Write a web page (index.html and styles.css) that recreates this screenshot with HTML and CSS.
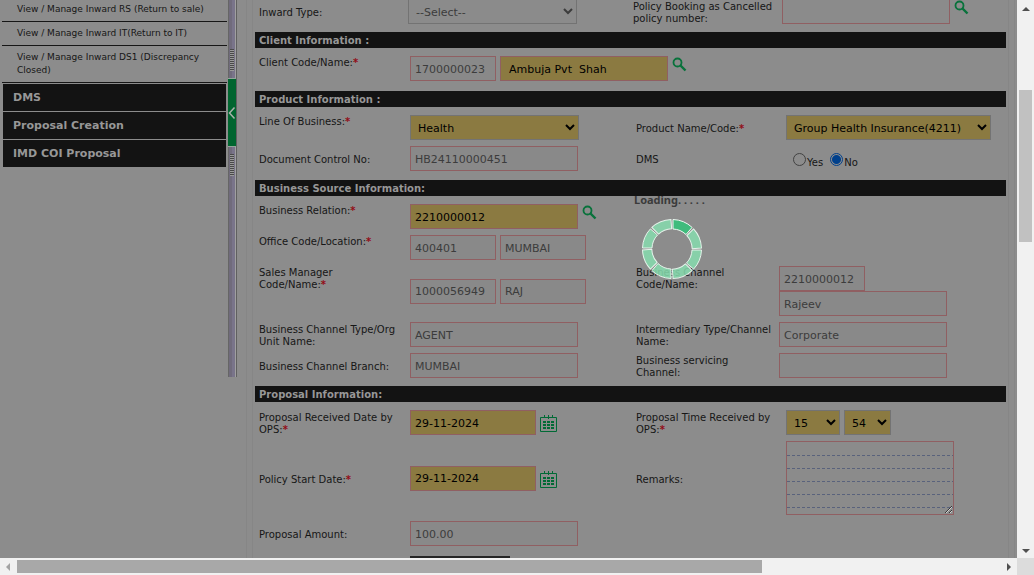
FILE: index.html
```html
<!DOCTYPE html>
<html lang="en">
<head>
<meta charset="utf-8">
<meta name="viewport" content="width=device-width, initial-scale=1">
<title>Proposal Creation</title>
<link rel="stylesheet" href="styles.css">
</head>
<body>
<svg class="sprite" aria-hidden="true">
  <symbol id="search" viewBox="0 0 15 15">
    <circle cx="5.5" cy="5.5" r="4" fill="none" stroke="#08723b" stroke-width="1.8"/>
    <path d="M8.5 8.5L13.5 13.5" stroke="#08723b" stroke-width="2.4"/>
  </symbol>
  <symbol id="calendar" viewBox="0 0 17 17">
    <path d="M.5 2.5H16.500V16.500H.5ZM4.500 0V3M8.500 0V4M12.500 0V3" fill="none" stroke="#006a35"/>
    <path d="M3 7h3M7 7h3M11 7h3M3 10h3M7 10h3M11 10h3M3 13h3M7 13h3M11 13h3" stroke="#006a35" stroke-width="2"/>
  </symbol>
</svg>
<div class="window">
  <div class="page">
    <nav class="sidebar">
      <ul class="links">
        <li><a href="#rs">View / Manage Inward RS (Return to sale)</a></li>
        <li><a href="#it">View / Manage Inward IT(Return to IT)</a></li>
        <li><a href="#ds1">View / Manage Inward DS1 (Discrepancy Closed)</a></li>
      </ul>
      <ul class="menu">
        <li><a href="#dms">DMS</a></li>
        <li><a href="#proposal">Proposal Creation</a></li>
        <li><a href="#imd">IMD COI Proposal</a></li>
      </ul>
    </nav>
    <div class="splitter">
      <span class="grip"></span>
      <button class="collapse" type="button" aria-label="Collapse menu">
        <svg width="8" height="14" viewBox="0 0 8 14"><path d="M6.500 1.500L1.500 7L6.500 12.500" fill="none" stroke="#a9b3ac" stroke-width="1.500"/></svg>
      </button>
      <span class="grip"></span>
    </div>
    <main class="main">
      <form class="form">
        <section class="section inward">
          <div class="row middle">
            <label for="inward">Inward Type:</label>
            <div class="field"><select id="inward" class="wide" disabled><option>--Select--</option></select></div>
            <label for="cancelled">Policy Booking as Cancelled policy number:</label>
            <div class="field"><input id="cancelled" class="wide" type="text"><button class="icon" type="button" aria-label="Search policy"><svg><use href="#search"/></svg></button></div>
          </div>
        </section>

        <section class="section client">
          <h2>Client Information :</h2>
          <div class="row">
            <label for="client">Client Code/Name:<b>*</b></label>
            <div class="field span"><input id="client" class="half" type="text" value="1700000023" disabled><input class="wide required name" type="text" value="Ambuja Pvt  Shah" aria-label="Client name"><button class="icon" type="button" aria-label="Search client"><svg><use href="#search"/></svg></button></div>
          </div>
        </section>

        <section class="section product">
          <h2>Product Information :</h2>
          <div class="row">
            <label for="lob">Line Of Business:<b>*</b></label>
            <div class="field"><select id="lob" class="wide required"><option>Health</option></select></div>
            <label class="mid" for="prod">Product Name/Code:<b>*</b></label>
            <div class="field"><select id="prod" class="product-select required"><option>Group Health Insurance(4211)</option></select></div>
          </div>
          <div class="row middle">
            <label for="doc">Document Control No:</label>
            <div class="field"><input id="doc" class="wide" type="text" value="HB24110000451" disabled></div>
            <span class="label">DMS</span>
            <div class="field radios" role="radiogroup" aria-label="DMS">
              <label><input type="radio" name="dms">Yes</label>
              <label><input type="radio" name="dms" checked>No</label>
            </div>
          </div>
        </section>

        <section class="section source">
          <h2>Business Source Information:</h2>
          <div class="row">
            <label for="rel">Business Relation:<b>*</b></label>
            <div class="field"><input id="rel" class="wide required" type="text" value="2210000012"><button class="icon" type="button" aria-label="Search relation"><svg><use href="#search"/></svg></button></div>
          </div>
          <div class="row">
            <label for="office">Office Code/Location:<b>*</b></label>
            <div class="field"><input id="office" class="half" type="text" value="400401" disabled><input class="half" type="text" value="MUMBAI" aria-label="Location" disabled></div>
          </div>
          <div class="row">
            <label for="manager">Sales Manager Code/Name:<b>*</b></label>
            <div class="field centered"><input id="manager" class="half" type="text" value="1000056949" disabled><input class="half" type="text" value="RAJ" aria-label="Manager name" disabled></div>
            <label for="channel">Business Channel Code/Name:</label>
            <div class="field stack"><input id="channel" class="half" type="text" value="2210000012" disabled><input class="wide" type="text" value="Rajeev" aria-label="Channel name" disabled></div>
          </div>
          <div class="row middle">
            <label for="type">Business Channel Type/Org Unit Name:</label>
            <div class="field"><input id="type" class="wide" type="text" value="AGENT" disabled></div>
            <label for="inter">Intermediary Type/Channel Name:</label>
            <div class="field"><input id="inter" class="wide" type="text" value="Corporate" disabled></div>
          </div>
          <div class="row middle">
            <label for="branch">Business Channel Branch:</label>
            <div class="field"><input id="branch" class="wide" type="text" value="MUMBAI" disabled></div>
            <label for="serv">Business servicing Channel:</label>
            <div class="field"><input id="serv" class="wide" type="text" disabled></div>
          </div>
          <div class="loading" role="status">
            <span>Loading. . . . .</span>
            <svg width="62" height="62" viewBox="-31 -31 62 62">
              <defs><path id="segment" d="M1 -29.500A29.500 29.500 0 0 1 20.100 -21.600L14 -14.500A20 20 0 0 0 1 -20Z"/></defs>
              <g fill="#86dcae" fill-opacity=".85" stroke="#eefaf3" stroke-opacity=".9">
                <use href="#segment" transform="rotate(45)"/>
                <use href="#segment" transform="rotate(90)"/>
                <use href="#segment" transform="rotate(135)"/>
                <use href="#segment" transform="rotate(180)"/>
                <use href="#segment" transform="rotate(225)"/>
                <use href="#segment" transform="rotate(270)"/>
                <use href="#segment" transform="rotate(315)"/>
              </g>
              <use href="#segment" fill="#3fbb7c" stroke="#eefaf3"/>
            </svg>
          </div>
        </section>

        <section class="section proposal">
          <h2>Proposal Information:</h2>
          <div class="row middle">
            <label for="received">Proposal Received Date by OPS:<b>*</b></label>
            <div class="field"><input id="received" class="date required" type="text" value="29-11-2024"><button class="icon cal" type="button" aria-label="Pick received date"><svg><use href="#calendar"/></svg></button></div>
            <label for="hour">Proposal Time Received by OPS:<b>*</b></label>
            <div class="field"><select id="hour" class="hour required"><option>15</option></select><select class="minute required" aria-label="Minute"><option>54</option></select></div>
          </div>
          <div class="row middle">
            <label for="start">Policy Start Date:<b>*</b></label>
            <div class="field"><input id="start" class="date required" type="text" value="29-11-2024"><button class="icon cal" type="button" aria-label="Pick start date"><svg><use href="#calendar"/></svg></button></div>
            <label for="remarks">Remarks:</label>
            <div class="field"><textarea id="remarks"></textarea></div>
          </div>
          <div class="row middle">
            <label for="amount">Proposal Amount:</label>
            <div class="field"><input id="amount" class="wide" type="text" value="100.00" disabled></div>
          </div>
          <div class="row actions"><button class="submit" type="button" aria-label="Add"></button></div>
        </section>
      </form>
    </main>
  </div>
  <div class="scroll vertical"><i class="up"></i><span></span><i class="down"></i></div>
  <div class="scroll horizontal"><i class="left"></i><span></span><i class="right"></i></div>
</div>
</body>
</html>
```
FILE: styles.css
```css
* { box-sizing: border-box; }
body {
  margin: 0;
  background: #8c8c8c;
  color: #161616;
  font: 10px/12px "DejaVu Sans", sans-serif;
}
ul { list-style: none; margin: 0; padding: 0; }
a { color: inherit; text-decoration: none; }
button { padding: 0; border: 0; background: none; }
svg { display: block; }
.sprite { display: none; }

.window {
  display: grid;
  grid-template: minmax(0, 1fr) 17px / minmax(0, 1fr) 17px;
  height: 100vh;
  background: #dcdcdc;
}
.page {
  display: flex;
  align-items: flex-start;
  overflow: hidden;
  background: #8c8c8c;
}

/* Sidebar */
.sidebar { flex: 0 0 227px; }
.links { padding-left: 2px; font-size: 9px; line-height: 13px; }
.links li { padding: 5px 8px 5px 15px; border-bottom: 1px solid #161616; }
.links li:first-child { padding-top: 3px; }
.menu { display: grid; gap: 1px; padding: 1px 1px 0 3px; }
.menu a {
  display: block;
  padding: 0 10px;
  background: #131313;
  color: #979797;
  font-size: 11px;
  font-weight: bold;
  line-height: 27px;
}
.splitter {
  display: flex;
  flex: 0 0 9px;
  flex-direction: column;
  align-items: center;
  gap: 7px;
  height: 377px;
  margin-left: 1px;
  padding-top: 49px;
  background: linear-gradient(90deg, #666 0 1px, #706b7c 1px 4px, #79748a 4px 7px, #a0a0a0 7px 8px, #606060 8px);
}
.grip {
  width: 4px;
  height: 22px;
  margin-right: 1px;
  background: repeating-linear-gradient(#494949 0 1px, #9a9a9a 1px 2px);
}
.collapse {
  display: grid;
  place-items: center;
  align-self: stretch;
  height: 69px;
  margin-right: 1px;
  border: solid #93a59a;
  border-width: 1px 0;
  background: #00652f;
}

/* Form */
.main {
  flex: 1;
  min-width: 0;
  margin: -1px 2px 0 9px;
  border: solid #868686;
  border-width: 0 1px;
}
.form {
  margin: 0 5px;
  padding: 0 2px;
  border: solid #868686;
  border-width: 0 1px;
}
.section {
  --cols: 151fr 226fr 150fr 220fr;
  display: grid;
  gap: 6px;
  position: relative;
  padding-bottom: 8px;
}
.inward { --cols: 149fr 225fr 149fr 224fr; }
.client { padding-bottom: 10px; }
.product { padding-bottom: 9px; }
.source { --cols: 151fr 226fr 143fr 227fr; }
h2 {
  margin: 0 0 2px;
  padding: 1px 4px 0;
  background: #131313;
  color: #979797;
  font-size: 10px;
  line-height: 15px;
}
.row {
  display: grid;
  grid-template-columns: var(--cols);
  padding-left: 4px;
}
.row > label { padding: 1px 4px 0 0; }
.row > label:first-child { padding-right: 10px; }
.middle { align-items: center; }
.row > .mid { align-self: center; }
.middle > label, .row > .mid, .label { padding-top: 2px; }
.row.middle > label { margin-bottom: -1px; }
label b { color: #920d17; }
.field { display: flex; align-items: flex-start; gap: 4px; }
.span { grid-column: span 3; }
.centered { align-items: center; }
.stack { flex-direction: column; gap: 0; }

input[type="text"], select, textarea {
  flex: none;
  height: 25px;
  margin: 0;
  padding: 1px 4px 0;
  border: 1px solid #905f62;
  border-radius: 0;
  background: #8b8b8b;
  color: #161616;
  font: 11px "DejaVu Sans", sans-serif;
  outline: 0;
}
input:disabled { background: #898989; color: #3c3c3c; }
select { padding-left: 3px; border-color: #737373; }
select:disabled { background: #8b8b8b; border-color: #737373; color: #3c3c3c; opacity: 1; }
input.required, select.required { background-color: #8b7a41; color: #000; }
input.name { padding-left: 8px; white-space: pre; }
.wide { width: 168px; }
select.wide { width: 169px; }
.half { width: 86px; }
.date { width: 126px; }
.hour { width: 54px; }
.minute { width: 47px; }
.product-select { width: 205px; }
textarea {
  width: 168px;
  height: 74px;
  background:
    linear-gradient(#8b8b8b, #8b8b8b) 0 0 / 100% 2px no-repeat,
    linear-gradient(#8b8b8b 0 12px, transparent 12px) 0 1px / 100% 13px,
    repeating-linear-gradient(90deg, #59627c 0 3px, #8b8b8b 3px 5px);
}
.icon { width: 15px; height: 15px; margin-top: 1px; }
.icon svg { width: 100%; height: 100%; }
.cal { width: 17px; height: 17px; margin-top: 5px; }
.radios { gap: 7px; padding: 5px 0 0 7px; }
.radios label { display: flex; align-items: flex-end; }
.radios input {
  appearance: none;
  width: 13px;
  height: 13px;
  margin: 0 1px 3px 0;
  border: 1px solid #424242;
  border-radius: 50%;
}
.radios input:checked {
  border-color: #00408c;
  background: radial-gradient(#00408c 0 4px, #8c8c8c 5px);
}
.actions { padding-top: 4px; }
.submit { grid-column: 2; width: 100px; height: 24px; background: #262626; }

/* Progress indicator over the form */
.loading {
  position: absolute;
  top: 13px;
  left: 379px;
  color: #3b3b3b;
  font: bold 11px/13px "Noto Sans", sans-serif;
}
.loading svg { margin: 12px 0 0 7px; }

/* Scroll bars */
.scroll { display: flex; align-items: center; background: #f1f1f1; }
.vertical { flex-direction: column; }
.scroll i { border: 4px solid transparent; }
.vertical .up { margin: 3px 0 79px; border-bottom-color: #505050; }
.vertical span { width: 13px; flex: 0 0 27.300%; background: #c1c1c1; }
.vertical .down { margin: auto 0 1px; border-top-color: #505050; }
.horizontal .left { margin: 0 7px 0 2px; border-right-color: #a3a3a3; }
.horizontal span { height: 13px; flex: 0 0 73.300%; background: #a8a8a8; }
.horizontal .right { margin: 0 2px 0 auto; border-left-color: #505050; }
```
